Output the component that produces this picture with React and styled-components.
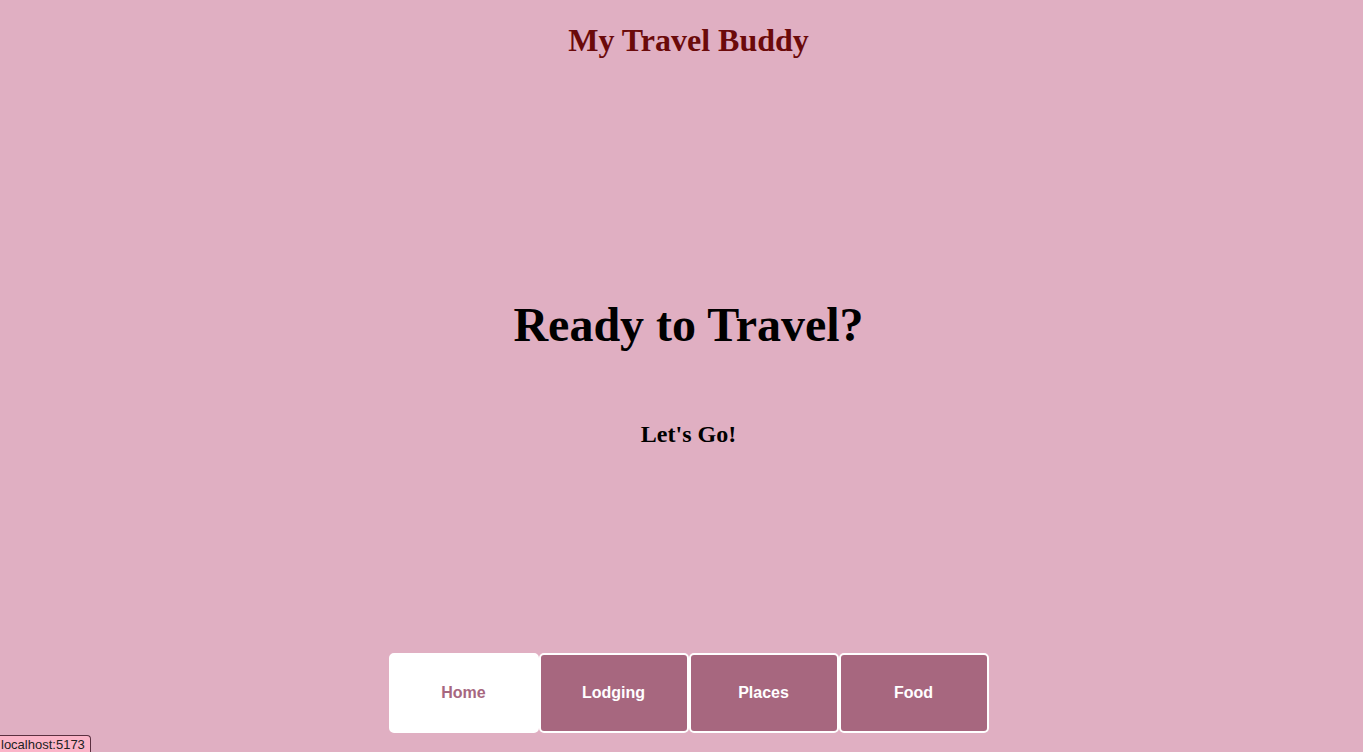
import React, { useState } from "react";
import styled, { createGlobalStyle } from "styled-components";

const GlobalStyle = createGlobalStyle`
  html, body {
    margin: 0;
    padding: 0;
    background: #e0afc2;
  }
  * { box-sizing: border-box; }
`;

const tabs = ["Home", "Lodging", "Places", "Food"];

const App = () => {
  const [active, setActive] = useState("Home");

  return (
    <Page>
      <GlobalStyle />
      <Title>My Travel Buddy</Title>

      <Hero>
        <Headline>Ready to Travel?</Headline>
        <Subline>Let's Go!</Subline>
      </Hero>

      <NavBar>
        {tabs.map((tab) => (
          <NavButton
            key={tab}
            $active={active === tab}
            onClick={() => setActive(tab)}
          >
            {tab}
          </NavButton>
        ))}
      </NavBar>

      <StatusTip>localhost:5173</StatusTip>
    </Page>
  );
};

export default App;

const Page = styled.div`
  position: relative;
  display: flex;
  flex-direction: column;
  align-items: center;
  height: 100vh;
  padding: 22px 0 0 14px;
  font-family: "Liberation Serif", "Times New Roman", serif;
  overflow: hidden;
`;

const Title = styled.h1`
  margin: 0;
  font-size: 32px;
  line-height: 37px;
  font-weight: 700;
  color: #6b0a0a;
`;

const Hero = styled.div`
  display: flex;
  flex-direction: column;
  align-items: center;
  margin-top: 238px;
`;

const Headline = styled.h2`
  margin: 0;
  font-size: 48px;
  line-height: 55px;
  font-weight: 700;
  color: #000;
`;

const Subline = styled.h3`
  margin: 68px 0 0;
  font-size: 24px;
  line-height: 28px;
  font-weight: 700;
  color: #000;
`;

const NavBar = styled.nav`
  display: flex;
  margin-top: auto;
  margin-bottom: 19px;
`;

const NavButton = styled.button`
  width: 150px;
  height: 80px;
  border: 2px solid #fff;
  border-radius: 5px;
  background: ${(p) => (p.$active ? "#fff" : "#a7677f")};
  color: ${(p) => (p.$active ? "#a7677f" : "#fff")};
  font-family: "Liberation Sans", Arial, sans-serif;
  font-size: 16px;
  font-weight: 700;
  cursor: pointer;
`;

const StatusTip = styled.div`
  position: absolute;
  left: 0;
  bottom: 0;
  padding: 1px 5px 0 1px;
  background: #fbb4c8;
  border: 1px solid #5a3040;
  border-left: none;
  border-bottom: none;
  border-top-right-radius: 4px;
  font-family: "Liberation Sans", Arial, sans-serif;
  font-size: 13px;
  line-height: 15px;
  color: #222;
`;
